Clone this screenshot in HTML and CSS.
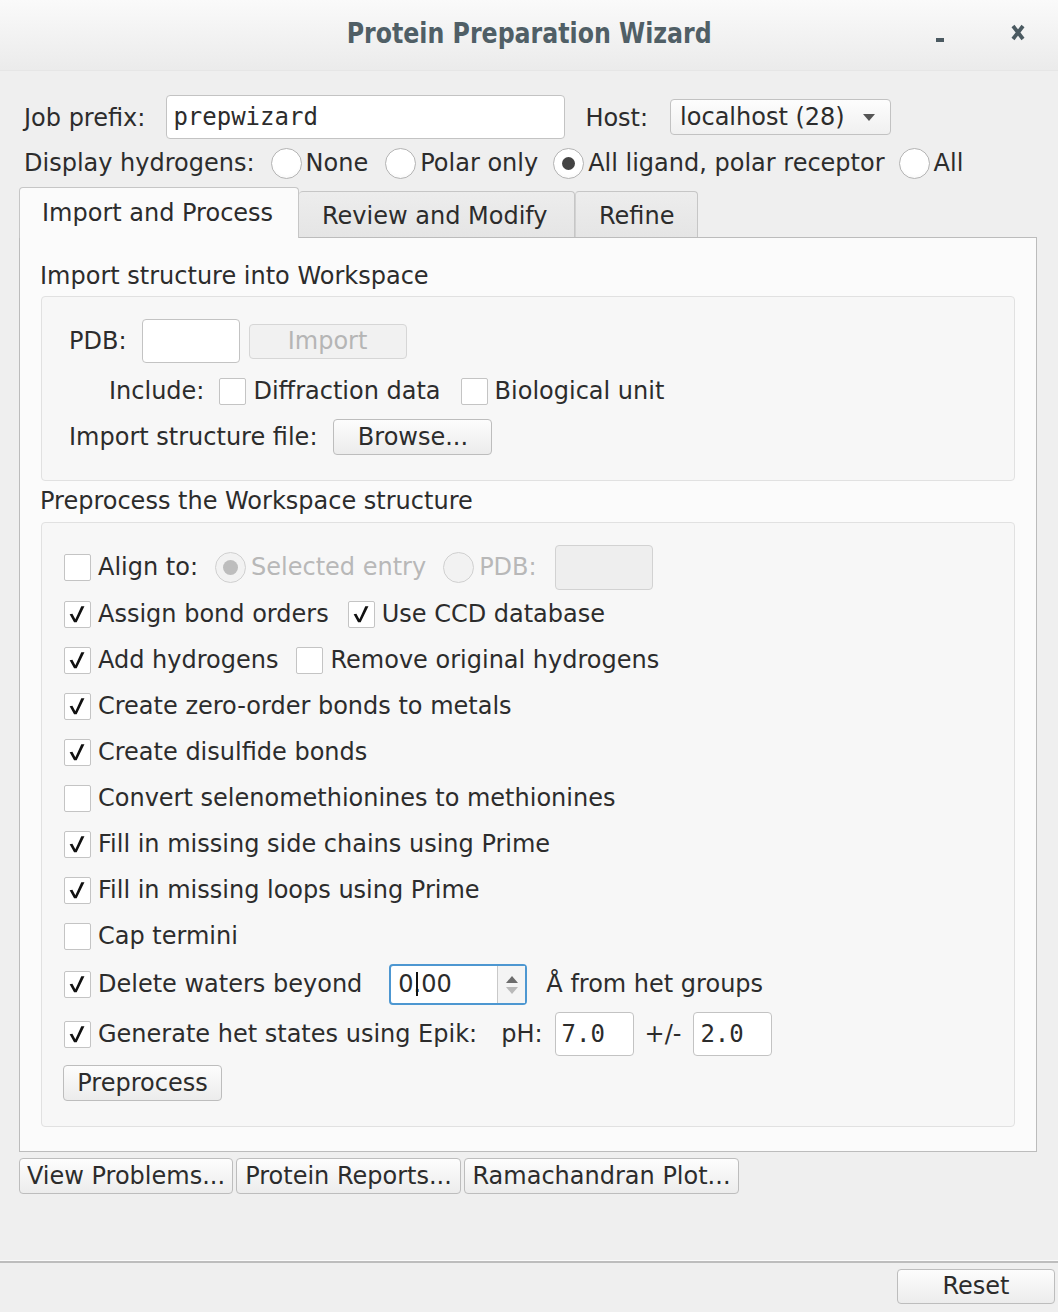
FILE: index.html
```html
<!DOCTYPE html>
<html>
<head>
<meta charset="utf-8">
<link rel="stylesheet" href="styles.css">
</head>
<body>
<div class="titlebar">
  <div class="title">Protein Preparation Wizard</div>
  <div class="wm">
    <span class="wm-min"></span>
    <svg class="wm-close" width="14" height="17" viewBox="0 0 14 17"><path d="M2 2 L12 15 M12 2 L2 15" stroke="#4b5a61" stroke-width="3.8" fill="none"/></svg>
  </div>
</div>

<div class="main">
  <div class="row row1">
    <span class="lbl job-lbl">Job prefix:</span>
    <div class="field mono job-field">prepwizard</div>
    <span class="lbl host-lbl">Host:</span>
    <div class="combo"><span>localhost (28)</span><span class="arrow"></span></div>
  </div>

  <div class="row row2">
    <span class="lbl hyd-lbl">Display hydrogens:</span>
    <span class="radio r-none"></span><span class="rtext">None</span>
    <span class="radio r-polar"></span><span class="rtext">Polar only</span>
    <span class="radio on r-lig"></span><span class="rtext">All ligand, polar receptor</span>
    <span class="radio r-all"></span><span class="rtext">All</span>
  </div>

  <div class="tabs">
    <div class="tab sel t1">Import and Process</div>
    <div class="tab t2">Review and Modify</div>
    <div class="tab t3">Refine</div>
  </div>

  <div class="pane">
    <div class="gtitle">Import structure into Workspace</div>
    <div class="gbox gbox1">
      <div class="row pdb-row">
        <span class="lbl">PDB:</span>
        <div class="field pdb-field"></div>
        <div class="btn disabled import-btn">Import</div>
      </div>
      <div class="row inc-row">
        <span class="lbl">Include:</span>
        <span class="cb inc-cb1"></span><span class="cbtext">Diffraction data</span>
        <span class="cb inc-cb2"></span><span class="cbtext">Biological unit</span>
      </div>
      <div class="row file-row">
        <span class="lbl">Import structure file:</span>
        <div class="btn browse-btn">Browse...</div>
      </div>
    </div>

    <div class="gtitle gtitle2">Preprocess the Workspace structure</div>
    <div class="gbox gbox2">
      <div class="row align-row">
        <span class="cb"></span><span class="cbtext">Align to:</span>
        <span class="radio on disabled ra1"></span><span class="rtext dis">Selected entry</span>
        <span class="radio disabled ra2"></span><span class="rtext dis">PDB:</span>
        <div class="field disabled align-field"></div>
      </div>
      <div class="row crow first">
        <span class="cb on"><svg viewBox="0 0 27 27"><polygon points="5,13.2 8,12.6 11.2,18.6 17.6,4.6 21,4.6 12.6,22 9.8,22" fill="#111"/></svg></span><span class="cbtext">Assign bond orders</span>
        <span class="cb on ccd-cb"><svg viewBox="0 0 27 27"><polygon points="5,13.2 8,12.6 11.2,18.6 17.6,4.6 21,4.6 12.6,22 9.8,22" fill="#111"/></svg></span><span class="cbtext">Use CCD database</span>
      </div>
      <div class="row crow">
        <span class="cb on"><svg viewBox="0 0 27 27"><polygon points="5,13.2 8,12.6 11.2,18.6 17.6,4.6 21,4.6 12.6,22 9.8,22" fill="#111"/></svg></span><span class="cbtext">Add hydrogens</span>
        <span class="cb rm-cb"></span><span class="cbtext">Remove original hydrogens</span>
      </div>
      <div class="row crow">
        <span class="cb on"><svg viewBox="0 0 27 27"><polygon points="5,13.2 8,12.6 11.2,18.6 17.6,4.6 21,4.6 12.6,22 9.8,22" fill="#111"/></svg></span><span class="cbtext">Create zero-order bonds to metals</span>
      </div>
      <div class="row crow">
        <span class="cb on"><svg viewBox="0 0 27 27"><polygon points="5,13.2 8,12.6 11.2,18.6 17.6,4.6 21,4.6 12.6,22 9.8,22" fill="#111"/></svg></span><span class="cbtext">Create disulfide bonds</span>
      </div>
      <div class="row crow">
        <span class="cb"></span><span class="cbtext">Convert selenomethionines to methionines</span>
      </div>
      <div class="row crow">
        <span class="cb on"><svg viewBox="0 0 27 27"><polygon points="5,13.2 8,12.6 11.2,18.6 17.6,4.6 21,4.6 12.6,22 9.8,22" fill="#111"/></svg></span><span class="cbtext">Fill in missing side chains using Prime</span>
      </div>
      <div class="row crow">
        <span class="cb on"><svg viewBox="0 0 27 27"><polygon points="5,13.2 8,12.6 11.2,18.6 17.6,4.6 21,4.6 12.6,22 9.8,22" fill="#111"/></svg></span><span class="cbtext">Fill in missing loops using Prime</span>
      </div>
      <div class="row crow">
        <span class="cb"></span><span class="cbtext">Cap termini</span>
      </div>
      <div class="row water-row">
        <span class="cb on"><svg viewBox="0 0 27 27"><polygon points="5,13.2 8,12.6 11.2,18.6 17.6,4.6 21,4.6 12.6,22 9.8,22" fill="#111"/></svg></span><span class="cbtext">Delete waters beyond</span>
        <div class="spin">
          <div class="spin-val">0<span class="dot">.<i class="caret"></i></span>00</div>
          <div class="spin-btns"><span class="up"></span><span class="down"></span></div>
        </div>
        <span class="lbl ang">Å from het groups</span>
      </div>
      <div class="row epik-row">
        <span class="cb on"><svg viewBox="0 0 27 27"><polygon points="5,13.2 8,12.6 11.2,18.6 17.6,4.6 21,4.6 12.6,22 9.8,22" fill="#111"/></svg></span><span class="cbtext">Generate het states using Epik:</span>
        <span class="lbl ph-lbl">pH:</span>
        <div class="field mono ph-field">7.0</div>
        <span class="lbl pm-lbl">+/-</span>
        <div class="field mono ph-field pm-field">2.0</div>
      </div>
      <div class="row pre-row">
        <div class="btn pre-btn">Preprocess</div>
      </div>
    </div>
  </div>

  <div class="row bottom-btns">
    <div class="btn bb1">View Problems...</div>
    <div class="btn bb2">Protein Reports...</div>
    <div class="btn bb3">Ramachandran Plot...</div>
  </div>
</div>

<div class="footer">
  <div class="sep"></div>
  <div class="footer-row">
    <div class="btn reset-btn">Reset</div>
  </div>
</div>
</body>
</html>
```

FILE: styles.css
```css
* { box-sizing: border-box; margin: 0; padding: 0; }
html, body { width: 1058px; height: 1312px; overflow: hidden; }
body {
  background: #efefef;
  font-family: "DejaVu Sans", "Liberation Sans", sans-serif;
  font-size: 24px;
  color: #2c2c2c;
  line-height: 1.2;
}

/* title bar */
.titlebar {
  height: 71px;
  background: linear-gradient(#fafafa, #ebebeb);
  border-bottom: 1px solid #e6e6e6;
  display: grid;
  grid-template-columns: 1fr auto 1fr;
  align-items: center;
}
.title {
  grid-column: 2;
  font-family: "DejaVu Sans Condensed", "DejaVu Sans", sans-serif;
  font-stretch: condensed;
  font-weight: 600;
  font-size: 28px;
  color: #505f66;
  padding-bottom: 2px;
  transform: scaleX(0.94);
}
.wm {
  grid-column: 3;
  justify-self: end;
  display: flex;
  align-items: center;
  padding-right: 33px;
  padding-bottom: 6px;
}
.wm-min {
  display: block;
  width: 8px;
  height: 4px;
  background: #4b5a61;
  margin-top: 16px;
  margin-right: 67px;
}
.wm-close { display: block; }

/* main */
.main { padding: 0 21px 0 19px; }
.row { display: flex; align-items: center; white-space: nowrap; }
.lbl { display: block; }
.mono { font-family: "DejaVu Sans Mono", "Liberation Mono", monospace; }

.field {
  background: #fff;
  border: 1px solid #c3c3c3;
  border-radius: 4px;
  display: flex;
  align-items: center;
  padding-left: 6px;
}
.field.disabled { background: #eeeeee; border-color: #d2d2d2; }

.row1 { margin-top: 24px; height: 44px; padding-top: 2px; }
.job-lbl { margin-left: 5px; }
.job-field { margin-left: 21px; width: 399px; height: 44px; margin-top: -2px; }
.host-lbl { margin-left: 20px; }
.combo {
  margin-left: 22px;
  width: 221px;
  height: 36px;
  border: 1px solid #c2c2c2;
  border-radius: 4px;
  background: linear-gradient(#fdfdfd, #f0f0f0);
  display: flex;
  align-items: center;
  padding-left: 9px;
  margin-top: -2px;
}
.combo .arrow {
  margin-left: auto;
  margin-right: 15px;
  width: 0; height: 0;
  border-left: 6px solid transparent;
  border-right: 6px solid transparent;
  border-top: 7px solid #555;
}

.row2 { margin-top: 6px; height: 36px; }
.hyd-lbl { margin-left: 5px; }
.radio {
  display: block;
  flex: none;
  width: 31px;
  height: 31px;
  border-radius: 50%;
  border: 1px solid #b4b4b4;
  background: radial-gradient(circle at 50% 40%, #ffffff 60%, #f1f1f1 100%);
  position: relative;
}
.radio.on::after {
  content: "";
  position: absolute;
  left: 50%; top: 50%;
  width: 13px; height: 13px;
  margin: -6.5px 0 0 -6.5px;
  border-radius: 50%;
  background: #434343;
}
.radio.disabled { border-color: #d0d0d0; background: #f2f2f2; }
.radio.disabled.on::after { background: #bdbdbd; width: 15px; height: 15px; margin: -7.5px 0 0 -7.5px; }
.rtext { margin-left: 4px; }
.rtext.dis { color: #b8b8b8; margin-left: 5px; }
.r-none { margin-left: 16px; }
.r-polar { margin-left: 17px; }
.r-lig { margin-left: 15px; }
.r-all { margin-left: 14px; }

/* tabs */
.tabs { margin-top: 6px; height: 50px; display: flex; align-items: flex-end; }
.tab {
  height: 46px;
  border: 1px solid #c6c6c6;
  border-bottom: none;
  border-radius: 4px 4px 0 0;
  background: linear-gradient(#ededed, #e5e5e5);
  display: flex;
  align-items: center;
  padding-left: 23px;
  padding-top: 3px;
}
.tab.sel {
  height: 51px;
  margin-bottom: -1px;
  background: #fbfbfb;
  position: relative;
  z-index: 1;
  padding-left: 22px;
  padding-bottom: 2px;
}
.t1 { width: 280px; }
.t2 { width: 276px; border-left: none; }
.t3 { width: 123px; border-left: 1px solid #d2d2d2; }

.pane {
  width: 1018px;
  background: #fbfbfb;
  border: 1px solid #bcbcbc;
  padding: 23px 21px 24px 21px;
}
.gtitle { height: 28px; line-height: 30px; margin-left: -1px; }
.gtitle2 { margin-top: 5px; }
.gbox {
  margin-top: 7px;
  background: #f7f7f7;
  border: 1px solid #e1e1e1;
  border-radius: 4px;
}
.gbox1 { padding: 22px 0 25px 27px; }
.gbox2 { margin-top: 8px; padding: 21px 0 25px 22px; }

.btn {
  border: 1px solid #bdbdbd;
  border-radius: 4px;
  background: linear-gradient(#fdfdfd, #ececec);
  display: flex;
  align-items: center;
  justify-content: center;
  height: 36px;
}
.btn.disabled { color: #b5b5b5; background: #f1f1f1; border-color: #d6d6d6; }

.pdb-row { height: 44px; }
.pdb-field { margin-left: 15px; width: 98px; height: 44px; }
.import-btn { margin-left: 9px; width: 158px; height: 35px; }
.inc-row { margin-top: 13px; height: 30px; padding-left: 40px; }
.file-row { margin-top: 13px; height: 36px; }
.browse-btn { margin-left: 16px; width: 159px; height: 36px; }

.cb {
  display: block;
  flex: none;
  width: 27px;
  height: 27px;
  background: #fff;
  border: 1px solid #c4c4c4;
  border-radius: 2px;
}
.cb svg { display: block; width: 25px; height: 25px; }
.cbtext { margin-left: 7px; }
.inc-cb1 { margin-left: 15px; }
.inc-cb2 { margin-left: 20px; }

.align-row { height: 46px; }
.ra1 { margin-left: 17px; }
.ra2 { margin-left: 17px; }
.align-field { margin-left: 18px; width: 98px; height: 45px; }

.crow { height: 30px; margin-top: 16px; }
.crow.first { margin-top: 9px; }
.ccd-cb { margin-left: 19px; }
.rm-cb { margin-left: 18px; }

.water-row { margin-top: 13px; height: 41px; }
.spin {
  margin-left: 27px;
  width: 138px;
  height: 41px;
  border: 2px solid #4d97d1;
  border-radius: 4px;
  background: #fff;
  display: flex;
}
.spin-val { flex: 1; display: flex; align-items: center; padding-left: 7px; }
.dot { position: relative; }
.caret {
  position: absolute;
  left: 2px;
  top: 2px;
  width: 2px;
  height: 24px;
  background: #111;
}
.spin-btns {
  width: 28px;
  border-left: 1px solid #c9c9c9;
  background: #f4f4f4;
  display: flex;
  flex-direction: column;
  align-items: center;
  justify-content: center;
  gap: 4px;
}
.spin-btns .up {
  width: 0; height: 0;
  border-left: 6px solid transparent;
  border-right: 6px solid transparent;
  border-bottom: 7px solid #6c6c6c;
}
.spin-btns .down {
  width: 0; height: 0;
  border-left: 6px solid transparent;
  border-right: 6px solid transparent;
  border-top: 7px solid #b9b9b9;
}
.ang { margin-left: 19px; }

.epik-row { margin-top: 7px; height: 44px; }
.ph-lbl { margin-left: 24px; }
.ph-field { margin-left: 12px; width: 79px; height: 44px; }
.pm-lbl { margin-left: 11px; }
.pre-row { margin-top: 9px; }
.pre-btn { width: 159px; height: 36px; margin-left: -1px; }

.bottom-btns { margin-top: 6px; height: 36px; gap: 3px; }
.bb1 { width: 214px; }
.bb2 { width: 225px; }
.bb3 { width: 275px; }

.footer { margin-top: 66px; }
.sep { height: 3px; border-top: 1px solid #fafafa; background: #bdbdbd; }
.footer-row { display: flex; justify-content: flex-end; padding-right: 3px; margin-top: 6px; }
.reset-btn { width: 158px; height: 35px; }
```
